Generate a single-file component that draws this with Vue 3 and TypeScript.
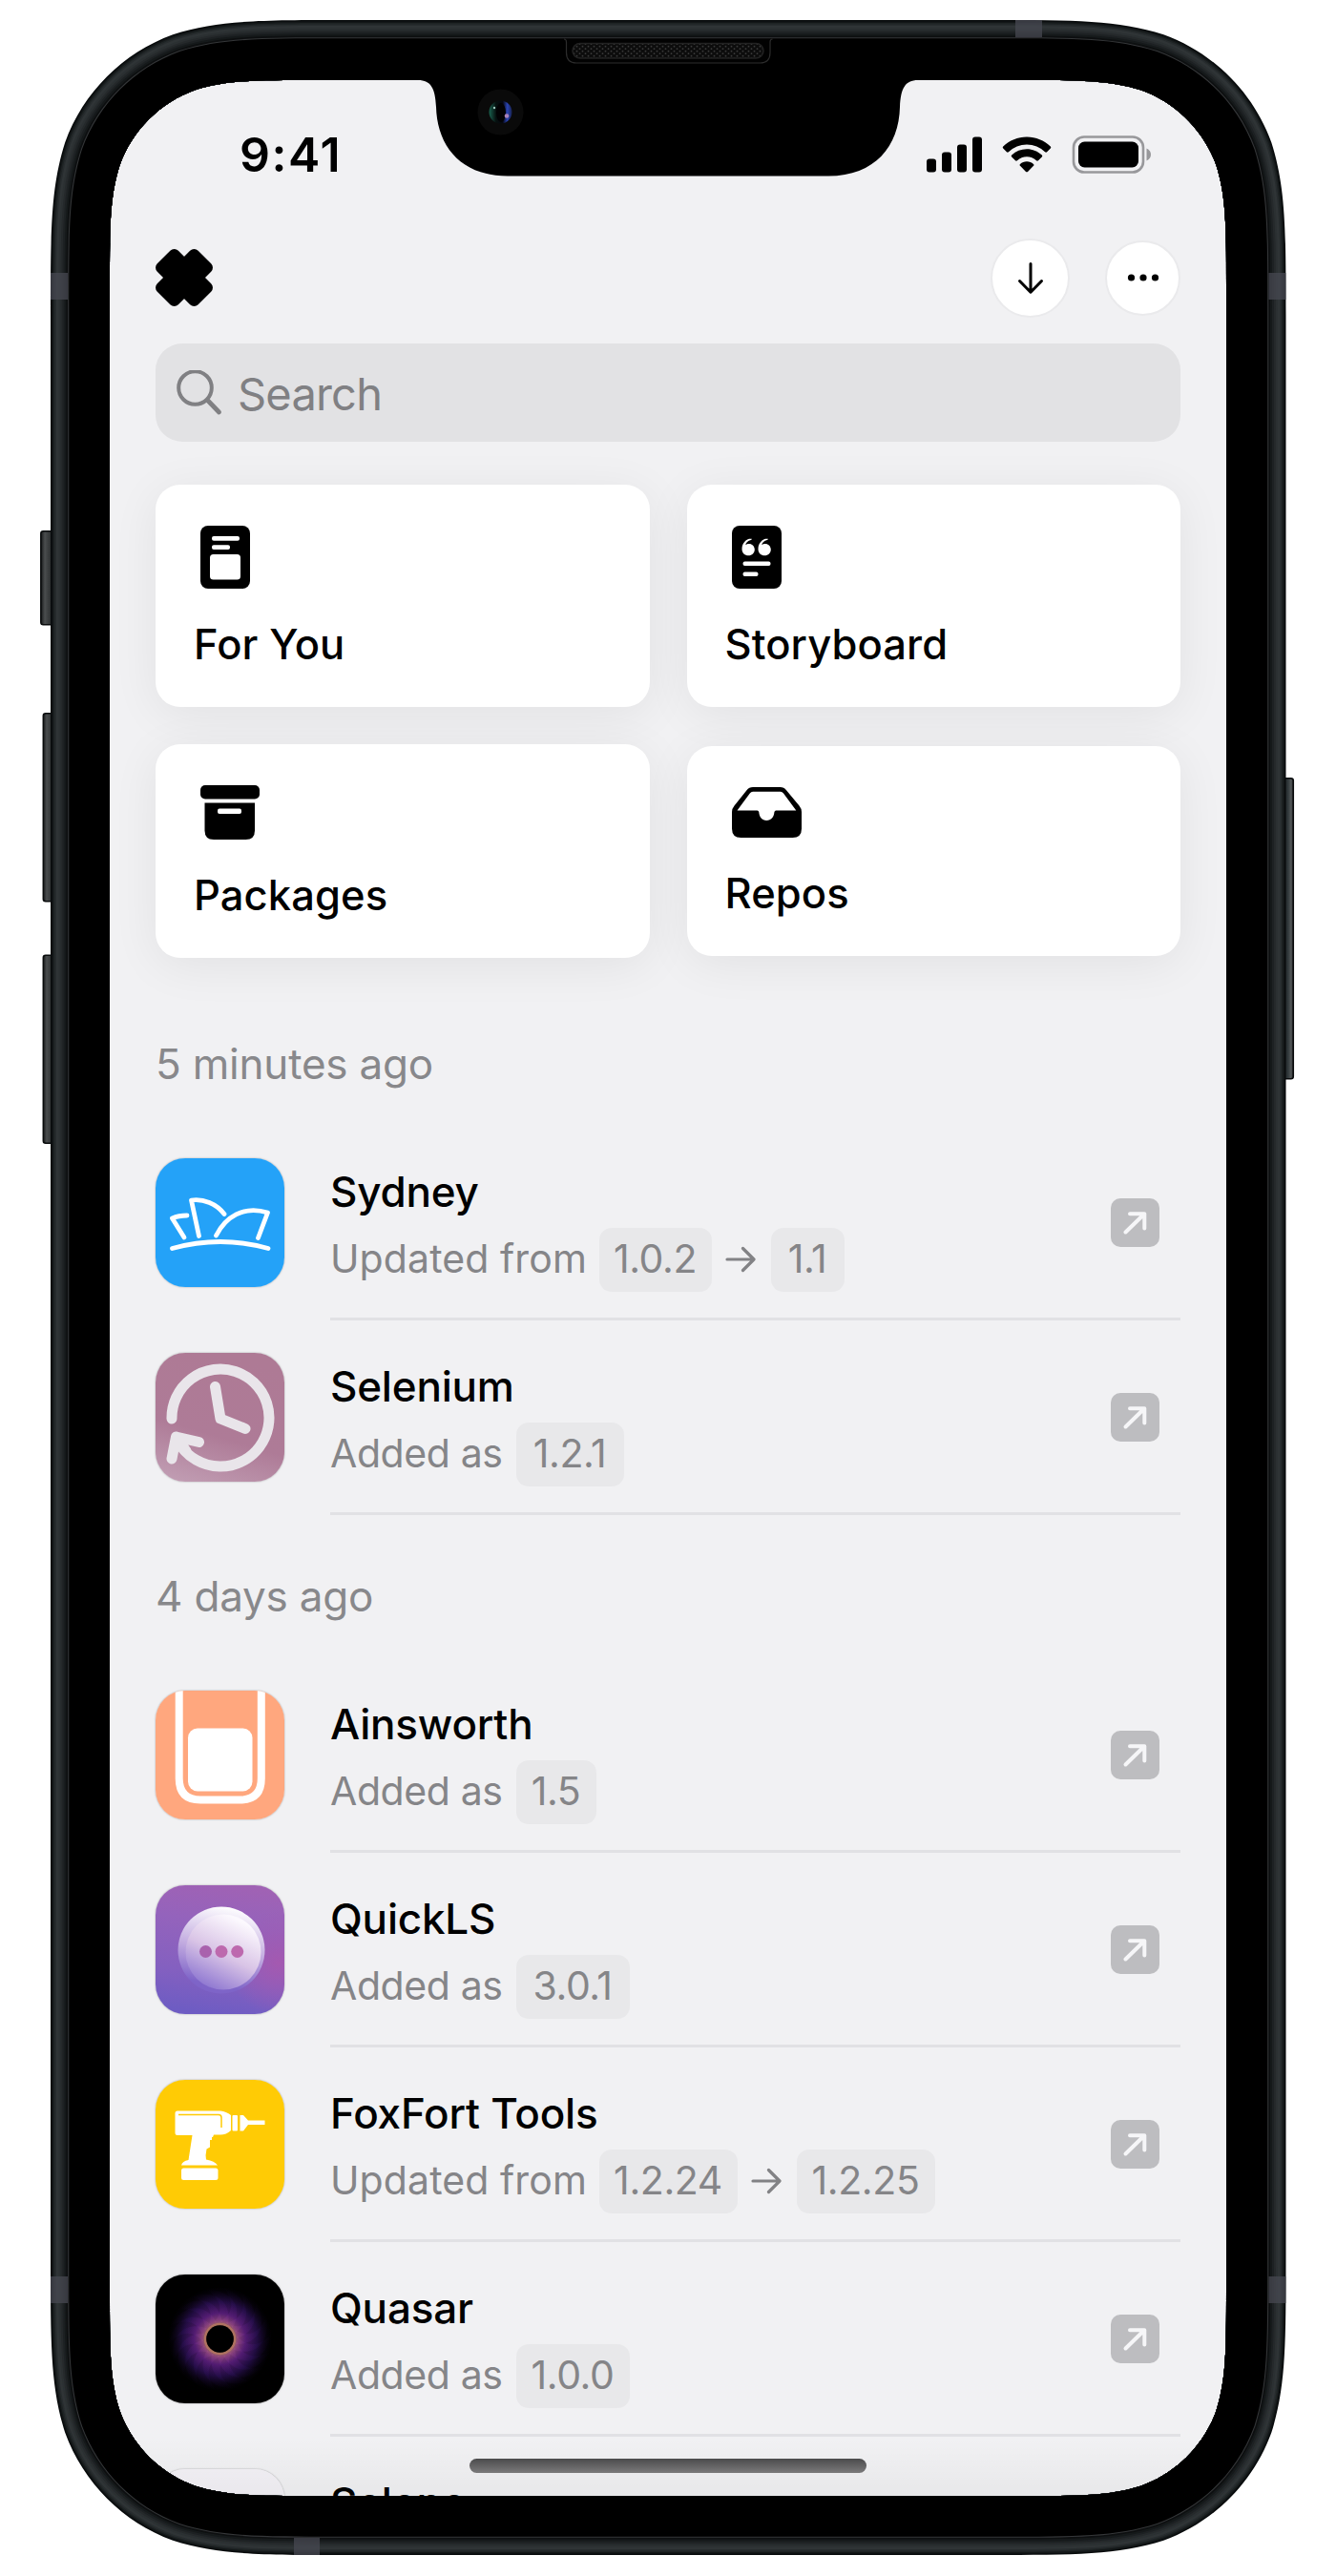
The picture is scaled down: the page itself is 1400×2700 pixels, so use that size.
<script setup lang="ts">
interface Change {
  id: string
  name: string
  label: string
  versions: { text: string; width: number }[]
}

interface Section {
  title: string
  items: Change[]
}

const sections: Section[] = [
  {
    title: '5 minutes ago',
    items: [
      { id: 'sydney', name: 'Sydney', label: 'Updated from', versions: [{ text: '1.0.2', width: 118 }, { text: '1.1', width: 77 }] },
      { id: 'selenium', name: 'Selenium', label: 'Added as', versions: [{ text: '1.2.1', width: 113 }] },
    ],
  },
  {
    title: '4 days ago',
    items: [
      { id: 'ainsworth', name: 'Ainsworth', label: 'Added as', versions: [{ text: '1.5', width: 84 }] },
      { id: 'quickls', name: 'QuickLS', label: 'Added as', versions: [{ text: '3.0.1', width: 119 }] },
      { id: 'foxfort', name: 'FoxFort Tools', label: 'Updated from', versions: [{ text: '1.2.24', width: 145 }, { text: '1.2.25', width: 145 }] },
      { id: 'quasar', name: 'Quasar', label: 'Added as', versions: [{ text: '1.0.0', width: 119 }] },
      { id: 'selene', name: 'Selene', label: 'Added as', versions: [{ text: '1.0', width: 84 }] },
    ],
  },
]

const columns = [
  [
    { id: 'foryou', label: 'For You' },
    { id: 'packages', label: 'Packages' },
  ],
  [
    { id: 'storyboard', label: 'Storyboard' },
    { id: 'repos', label: 'Repos' },
  ],
]

// Rounded rectangle with continuous-curvature corners.
function squircle(x: number, y: number, w: number, h: number, r: number): string {
  const c = [1.52866, 1.08849, 0.86841, 0.63149, 0.37282, 0.16906, 0.07491].map((k) => k * r)
  const [a, b, d, e, f, g, i] = c
  const corner = (px: number, py: number, sx: number, sy: number, flip: boolean) => {
    const p = (u: number, v: number) => (flip ? `${px + sx * v} ${py + sy * u}` : `${px + sx * u} ${py + sy * v}`)
    return `${p(a, 0)} C${p(b, 0)} ${p(d, 0)} ${p(e, i)} C${p(f, g)} ${p(g, f)} ${p(i, e)} C${p(0, d)} ${p(0, b)} ${p(0, a)}`
  }
  return `M${corner(x + w, y, -1, 1, false)} L${corner(x + w, y + h, -1, -1, true)} L${corner(x, y + h, 1, -1, false)} L${corner(x, y, 1, 1, true)} Z`
}

const outer = (inset: number) => squircle(53 + inset, 21 + inset, 1294.5 - 2 * inset, 2657 - 2 * inset, 203 - inset)
const screenHole = squircle(115, 84, 1170, 2532, 141)

const metal = [
  { inset: 0, color: '#080b0c' },
  { inset: 1.5, color: '#131718' },
  { inset: 3, color: '#1e2324' },
  { inset: 4.5, color: '#272c2e' },
  { inset: 6, color: '#2f3436' },
  { inset: 8.5, color: '#2b3032' },
  { inset: 10.5, color: '#25292b' },
  { inset: 12.5, color: '#1d2123' },
  { inset: 14.5, color: '#15191a' },
  { inset: 16.5, color: '#0d0f10' },
  { inset: 18.2, color: '#343638' },
  { inset: 19.3, color: '#000000' },
]

const notch =
  'M438 82 V84 C452 84 456 93 457 112 C458 153 483 184.500 532 184.500 H868 C917 184.500 942 153 943 112 C944 93 948 84 962 84 V82 Z'

const blades = Array.from({ length: 18 }, (_, n) => n * 20)
</script>

<template>
  <div class="stage">
    <div class="screen">
      <div class="status">
        <span class="time">9:41</span>
        <svg class="status-icons" width="236" height="40" viewBox="0 0 236 40">
          <rect x="1" y="24.500" width="10" height="14" rx="3" />
          <rect x="17" y="17.500" width="10" height="21" rx="3" />
          <rect x="33" y="9.500" width="10" height="29" rx="3" />
          <rect x="49" y="1.500" width="10" height="37" rx="3" />
          <path d="M106 1.500c9.500 0 18.300 3.700 24.800 10 .6.600.6 1.400 0 2l-3.700 3.700c-.6.600-1.400.6-2 0a27.300 27.300 0 0 0-38.200 0c-.6.600-1.400.6-2 0l-3.700-3.700c-.6-.6-.6-1.400 0-2 6.500-6.300 15.300-10 24.800-10z" />
          <path d="M106 14.300c6 0 11.600 2.300 15.800 6.300.6.600.6 1.400 0 2l-3.800 3.700c-.6.600-1.400.6-2 0a14.600 14.600 0 0 0-20 0c-.6.600-1.400.6-2 0l-3.800-3.700c-.6-.6-.6-1.400 0-2a22.900 22.900 0 0 1 15.800-6.300z" />
          <path d="M106 27.200c2.700 0 5.100 1 7 2.700.6.600.6 1.300 0 1.900l-6 6.100c-.6.600-1.400.6-2 0l-6-6.100c-.6-.6-.6-1.300 0-1.900 1.900-1.700 4.300-2.700 7-2.700z" />
          <rect x="155" y="1.500" width="73" height="37" rx="11" fill="none" stroke="#98989b" stroke-width="2.600" />
          <rect x="160" y="6.500" width="63" height="27" rx="6.500" />
          <path d="M231.500 13.500c3 1.200 4.500 3.700 4.500 6.500s-1.500 5.300-4.500 6.500z" fill="#98989b" />
        </svg>
      </div>

      <header class="header">
        <svg class="logo" width="60" height="60" viewBox="-30 -30 60 60">
          <rect x="-30.300" y="-15.600" width="60.600" height="31.200" rx="6" transform="rotate(45)" />
          <rect x="-30.300" y="-15.600" width="60.600" height="31.200" rx="6" transform="rotate(-45)" />
        </svg>
        <div class="actions">
          <button class="round large" aria-label="Downloads">
            <svg width="34" height="40" viewBox="0 0 34 40">
              <path d="M17 5.500V35M5.500 23.500 17 35.300 28.500 23.500" fill="none" stroke="#000" stroke-width="3" stroke-linecap="round" stroke-linejoin="round" />
            </svg>
          </button>
          <button class="round" aria-label="More">
            <svg width="40" height="12" viewBox="0 0 40 12">
              <circle cx="7.500" cy="6" r="3.600" /><circle cx="20" cy="6" r="3.600" /><circle cx="32.500" cy="6" r="3.600" />
            </svg>
          </button>
        </div>
      </header>

      <div class="search">
        <svg width="48" height="48" viewBox="0 0 48 48" fill="none" stroke="#808083" stroke-linecap="round">
          <circle cx="19.500" cy="18.500" r="17.300" stroke-width="4" />
          <path d="M32.500 31.500 44.500 44" stroke-width="4.800" />
        </svg>
        <span>Search</span>
      </div>

      <nav class="cards">
        <div v-for="(column, c) in columns" :key="c" class="column">
          <a v-for="card in column" :key="card.id" class="card" :class="card.id">
            <svg v-if="card.id === 'foryou'" width="52" height="66" viewBox="0 0 52 66">
              <rect width="52" height="66" rx="8" />
              <g fill="#fff">
                <rect x="12" y="11" width="29" height="4.800" rx="2" />
                <rect x="12" y="20.300" width="19" height="4.800" rx="2" />
                <rect x="10" y="30" width="32" height="26.500" rx="3.500" />
              </g>
            </svg>
            <svg v-else-if="card.id === 'packages'" width="62" height="57" viewBox="0 0 62 57">
              <rect width="62" height="14.500" rx="5" />
              <path d="M4.500 18.500h52.500V47.500q0 9.500-9.500 9.500h-33.500q-9.500 0-9.500-9.500z" />
              <rect x="18" y="24.500" width="25" height="5.500" rx="2" fill="#fff" />
            </svg>
            <svg v-else-if="card.id === 'storyboard'" width="52" height="66" viewBox="0 0 52 66">
              <rect width="52" height="66" rx="8" />
              <g fill="#fff">
                <path d="M20 13.500C14.500 14 10.500 18.500 10.500 24.500c0 4 3 6.800 6.800 6.800 3.700 0 6.500-2.800 6.500-6.300 0-3.600-2.700-6.100-6-6.100-1.700 0-3 .6-3.600 1.200.4-2.400 2.600-4.400 5.700-5.100 1.300-.4 1.300-1.500.1-1.500z" />
                <path d="M37 13.500C31.500 14 27.500 18.500 27.500 24.500c0 4 3 6.800 6.800 6.800 3.700 0 6.500-2.800 6.500-6.300 0-3.600-2.700-6.100-6-6.100-1.700 0-3 .6-3.600 1.200.4-2.400 2.600-4.400 5.700-5.100 1.300-.4 1.300-1.500.1-1.500z" />
                <rect x="11.500" y="37.500" width="29" height="4.600" rx="2" />
                <rect x="11.500" y="48.500" width="16" height="4.600" rx="2" />
              </g>
            </svg>
            <svg v-else width="73" height="53" viewBox="0 0 73 53">
              <path fill-rule="evenodd" d="M22 0H50.500q4 0 6.500 3.300L70.500 19.500Q73 22.500 73 26V43.500Q73 53 63.500 53H9.500Q0 53 0 43.500V26q0-3.500 2.500-6.500L15.500 3.300Q18 0 22 0zM22 4.800q-2 0-3.200 1.700L5.500 24.500H26.500q1.500 0 1.800 1.800C28.700 31.500 31.500 35 36.300 35s7.700-3.500 8.100-8.700q.3-1.800 1.800-1.800H67.300L54 6.500q-1.300-1.700-3.200-1.700z" />
            </svg>
            <span>{{ card.label }}</span>
          </a>
        </div>
      </nav>

      <section v-for="section in sections" :key="section.title" class="section">
        <h2>{{ section.title }}</h2>
        <article v-for="item in section.items" :key="item.id" class="row">
          <div class="app-icon">
            <svg v-if="item.id === 'sydney'" viewBox="0 0 135 135" fill="none" stroke="#fff" stroke-width="4.800" stroke-linecap="round" stroke-linejoin="round">
              <rect width="135" height="135" fill="#24a2f8" stroke="none" />
              <path d="M33 60Q24 60 17.500 63L30 83" />
              <path d="M45.500 81.500 37.500 44C50 42 64 48 72 58.500" />
              <path d="M63.500 81C73 62 92 49 117.500 57L107.500 83.500" />
              <path d="M17.500 94.500Q68 80.500 118 94.500" />
            </svg>
            <svg v-else-if="item.id === 'selenium'" viewBox="0 0 135 135" fill="none" stroke="#e9e5ea" stroke-width="11" stroke-linecap="round" stroke-linejoin="round">
              <defs>
                <linearGradient id="selenium-bg" x1=".2" y1="1" x2=".5" y2="0">
                  <stop offset="0" stop-color="#c09cb2" /><stop offset=".4" stop-color="#ae7b97" /><stop offset="1" stop-color="#ae7a95" />
                </linearGradient>
              </defs>
              <rect width="135" height="135" fill="url(#selenium-bg)" stroke="none" />
              <path d="M17 69A51 51 0 1 1 26 97" />
              <path d="M45.500 93.500 21.500 88 17 111M21.500 88 32 103" />
              <path d="M62.500 35.500 68 69 94 79.500" />
            </svg>
            <svg v-else-if="item.id === 'ainsworth'" viewBox="0 0 135 135">
              <rect width="135" height="135" fill="#ffa77e" />
              <path d="M24.700-5V92Q24.700 114.500 47 114.500H88.500Q110.800 114.500 110.800 92V-5" fill="none" stroke="#fff" stroke-width="8" />
              <rect x="34" y="39.500" width="67.500" height="66" rx="10" fill="#fff" />
            </svg>
            <svg v-else-if="item.id === 'quickls'" viewBox="0 0 135 135">
              <defs>
                <linearGradient id="quick-bg" x1=".45" y1="1" x2=".6" y2="0">
                  <stop offset="0" stop-color="#6e5cc3" /><stop offset=".3" stop-color="#8460c0" /><stop offset=".7" stop-color="#9463bc" /><stop offset="1" stop-color="#a062b4" />
                </linearGradient>
                <radialGradient id="quick-pink" cx=".95" cy=".6" r=".4">
                  <stop offset="0" stop-color="#a459b0" /><stop offset="1" stop-color="#a459b0" stop-opacity="0" />
                </radialGradient>
                <linearGradient id="quick-ring" x1=".6" y1="0" x2=".4" y2="1">
                  <stop offset="0" stop-color="#fff" /><stop offset=".5" stop-color="#c2abe0" /><stop offset=".9" stop-color="#7e64c8" />
                </linearGradient>
                <linearGradient id="quick-disc" x1=".75" y1=".1" x2=".3" y2="1">
                  <stop offset="0" stop-color="#fcf9fe" /><stop offset=".5" stop-color="#d9c4e6" /><stop offset="1" stop-color="#8b74d0" />
                </linearGradient>
              </defs>
              <rect width="135" height="135" fill="url(#quick-bg)" />
              <rect width="135" height="135" fill="url(#quick-pink)" />
              <circle cx="69" cy="68" r="45.500" fill="url(#quick-ring)" />
              <circle cx="71" cy="70" r="39.500" fill="url(#quick-disc)" />
              <g fill="#bd69ae">
                <circle cx="52.500" cy="69.500" r="6.500" fill="#a962ad" /><circle cx="69" cy="69.500" r="6.500" /><circle cx="85.700" cy="69.500" r="6.500" />
              </g>
            </svg>
            <svg v-else-if="item.id === 'foxfort'" viewBox="0 0 135 135">
              <rect width="135" height="135" fill="#ffcb05" />
              <g fill="#fff">
                <path d="M23 32.500H68Q74 33 79 37V53Q74 57.500 68 57.500H61L60 60H59V63H57V70.500L53.500 72.500Q52 79 53 83.500 62 85 65 89.500H27Q28 85 34.500 84L38.500 58H23Q20.500 58 20.500 55.500V35Q20.500 32.500 23 32.500z" />
                <rect x="27" y="92.500" width="38.500" height="12.500" rx="2.500" />
                <rect x="80.500" y="37" width="5.500" height="16.500" rx="1" />
                <path d="M88.500 37H92L97 42.500H114.500V47H97L92 53.500H88.500z" />
              </g>
              <path d="M24 36.500H66Q69 36.500 69 39.500V50" fill="none" stroke="#ffcb05" stroke-width="1.500" />
            </svg>
            <svg v-else-if="item.id === 'quasar'" viewBox="0 0 135 135">
              <defs>
                <radialGradient id="quasar-glow" gradientUnits="userSpaceOnUse" cx="67.500" cy="67.500" r="54">
                  <stop offset=".27" stop-color="#bd7a75" /><stop offset=".36" stop-color="#a04d92" />
                  <stop offset=".5" stop-color="#6a2492" /><stop offset=".72" stop-color="#31125f" /><stop offset="1" stop-color="#0b0418" stop-opacity=".1" />
                </radialGradient>
              </defs>
              <rect width="135" height="135" fill="#000" />
              <circle cx="67.500" cy="67.500" r="54" fill="url(#quasar-glow)" opacity=".55" />
              <path v-for="angle in blades" :key="angle" d="M67.500 49C80 43 84 30 72 14 98 24 102 46 84 61z" fill="url(#quasar-glow)" opacity=".3" :transform="`rotate(${angle} 67.5 67.5)`" />
              <circle cx="67.500" cy="67.500" r="15.500" fill="none" stroke="#b97b62" stroke-width="2.500" opacity=".8" />
              <circle cx="67.500" cy="67.500" r="14.300" fill="#000" />
            </svg>
            <svg v-else viewBox="0 0 135 135"><rect width="135" height="135" fill="#f3f1f6" /></svg>
          </div>
          <div class="body">
            <div class="texts">
              <h3>{{ item.name }}</h3>
              <div class="detail">
                <span class="label" :class="{ wide: item.versions.length > 1 }">{{ item.label }}</span>
                <template v-for="(version, n) in item.versions" :key="version.text">
                  <svg v-if="n > 0" class="arrow" width="32" height="28" viewBox="0 0 32 28">
                    <path d="M2 14H29M18.500 2.500 30 14 18.500 25.500" fill="none" stroke="#828285" stroke-width="3.200" stroke-linecap="round" stroke-linejoin="round" />
                  </svg>
                  <span class="badge" :style="{ width: version.width + 'px' }">{{ version.text }}</span>
                </template>
              </div>
            </div>
            <svg class="open" width="51" height="51" viewBox="0 0 51 51">
              <rect width="51" height="51" rx="10" fill="#bdbdc0" />
              <path d="M15.500 35.500 35 16.500M20 16.300H35.300V31.500" fill="none" stroke="#f6f6f8" stroke-width="4" stroke-linecap="round" stroke-linejoin="round" />
            </svg>
          </div>
        </article>
      </section>
      <div class="shade"></div>
      <div class="home"></div>
    </div>

    <svg class="device" width="1400" height="2700" viewBox="0 0 1400 2700">
      <defs>
        <linearGradient id="key-left"><stop offset="0" stop-color="#161819" /><stop offset=".3" stop-color="#4a4d4e" /><stop offset="1" stop-color="#1d2021" /></linearGradient>
        <linearGradient id="key-right"><stop offset="0" stop-color="#161b1c" /><stop offset=".5" stop-color="#30373a" /><stop offset=".8" stop-color="#55595a" /><stop offset="1" stop-color="#161819" /></linearGradient>
        <pattern id="mesh" width="6" height="5" patternUnits="userSpaceOnUse">
          <rect width="6" height="5" fill="#0c0c0c" /><circle cx="1.500" cy="1.200" r=".9" fill="#3a3a3a" /><circle cx="4.500" cy="3.700" r=".9" fill="#3a3a3a" />
        </pattern>
        <linearGradient id="lens"><stop offset="0" stop-color="#1a6250" /><stop offset=".3" stop-color="#06100f" /><stop offset=".6" stop-color="#05060f" /><stop offset=".8" stop-color="#2a44b4" /><stop offset="1" stop-color="#18224e" /></linearGradient>
      </defs>
      <g stroke="#090b0c" stroke-width="1.500">
        <rect x="42.800" y="556.800" width="14" height="98" rx="2.500" fill="url(#key-left)" />
        <rect x="45.300" y="747.800" width="12" height="197" rx="2.500" fill="url(#key-left)" />
        <rect x="45.300" y="1001.300" width="12" height="197" rx="2.500" fill="url(#key-left)" />
        <rect x="1344" y="815.800" width="11.300" height="315" rx="2.500" fill="url(#key-right)" />
      </g>
      <path v-for="ring in metal" :key="ring.inset" :d="outer(ring.inset) + screenHole" :fill="ring.color" fill-rule="evenodd" />
      <g fill="#474852" opacity=".75">
        <rect x="53" y="286" width="18" height="28" /><rect x="1329.500" y="286" width="18" height="28" />
        <rect x="53" y="2386" width="18" height="28" /><rect x="1329.500" y="2386" width="18" height="28" />
        <rect x="1064" y="21" width="28" height="18" /><rect x="308" y="2660" width="27" height="18" />
      </g>
      <path :d="notch" fill="#000" />
      <path d="M591 41Q593.500 41 593.500 44V55Q593.500 66 604 66H796.500Q807 66 807 55V44Q807 41 809.500 41" fill="#020202" stroke="#2c2c2c" stroke-width="1.200" />
      <rect x="600" y="45.500" width="200" height="15.500" rx="7.700" fill="url(#mesh)" stroke="#222" stroke-width="1.500" />
      <circle cx="524.500" cy="117.500" r="24" fill="#0a0a0a" />
      <circle cx="524.500" cy="117.500" r="12" fill="url(#lens)" />
      <ellipse cx="525" cy="118" rx="5" ry="10" fill="#020204" />
      <circle cx="531" cy="121.500" r="2.300" fill="#a982ba" /><circle cx="518" cy="113" r="1.200" fill="#9ec9bf" />
    </svg>
  </div>
</template>

<style>
body {
  background: #fff;
}
</style>

<style scoped>
.stage {
  position: relative;
  width: 1400px;
  height: 2700px;
  box-sizing: border-box;
  padding: 84px 115px;
  overflow: hidden;
  font-family: Inter, "Liberation Sans", sans-serif;
}
.device {
  position: absolute;
  inset: 0;
}
.screen {
  position: relative;
  width: 1170px;
  height: 2532px;
  box-sizing: border-box;
  padding: 0 48px;
  background: #f1f1f3;
  overflow: hidden;
  clip-path: inset(0 round 120px);
}
.status {
  display: flex;
  align-items: center;
  justify-content: space-between;
  height: 156px;
  padding: 0 31px 0 88px;
}
.time {
  font-size: 50px;
  font-weight: 600;
  letter-spacing: 1.6px;
}
.header {
  display: flex;
  align-items: center;
  justify-content: space-between;
  height: 102px;
}
.actions {
  display: flex;
  align-items: center;
  gap: 37px;
}
.round {
  display: flex;
  align-items: center;
  justify-content: center;
  width: 79px;
  height: 79px;
  padding: 0;
  border: 2px solid #eaeaec;
  border-radius: 50%;
  background: #fff;
}
.round.large {
  width: 83px;
  height: 83px;
}
.search {
  display: flex;
  align-items: center;
  gap: 16px;
  height: 103px;
  box-sizing: border-box;
  margin-top: 18px;
  padding-left: 22px;
  border-radius: 28px;
  background: #e2e2e4;
  color: #808083;
  font-size: 47px;
  letter-spacing: -0.8px;
}
.search span {
  padding-top: 1px;
}
.cards {
  display: flex;
  gap: 39px;
  height: 497px;
  margin-top: 45px;
}
.column {
  display: flex;
  flex: 1;
  flex-direction: column;
  gap: 39px;
}
.column:last-child {
  gap: 41px;
}
.card {
  display: flex;
  flex-direction: column;
  align-items: flex-start;
  justify-content: space-between;
  box-sizing: border-box;
  height: 233px;
  padding: 43px 47px 38px;
  border-radius: 26px;
  background: #fff;
  box-shadow: 0 8px 50px rgba(0, 0, 0, 0.065);
}
.card.packages {
  height: 224px;
}
.card.repos {
  height: 220px;
}
.card span {
  margin-left: -7px;
  color: #000;
  font-size: 43.5px;
  font-weight: 500;
  line-height: 56px;
  letter-spacing: 0.1px;
}
.section h2 {
  margin: 55px 0 35px;
  color: #88888b;
  font-size: 44px;
  font-weight: 400;
  line-height: 60px;
  letter-spacing: -0.2px;
}
.cards + .section h2 {
  margin-top: 80px;
}
.row {
  display: flex;
  gap: 48px;
  height: 204px;
}
.app-icon {
  flex: none;
  width: 135px;
  height: 135px;
  margin-top: 34px;
  border-radius: 31px;
  overflow: hidden;
  box-shadow: 0 0 2px rgba(0, 0, 0, 0.35);
}
.app-icon svg {
  display: block;
}
.body {
  display: flex;
  flex: 1;
  justify-content: space-between;
  box-sizing: border-box;
  padding: 42px 22px 0 0;
  border-bottom: 3px solid #e1e1e4;
}
.texts h3 {
  margin: 0 0 10px;
  color: #000;
  font-size: 44px;
  font-weight: 500;
  line-height: 54px;
  letter-spacing: -0.2px;
}
.detail {
  display: flex;
  align-items: center;
  height: 68px;
  color: #858588;
  font-size: 41px;
  letter-spacing: -0.4px;
  white-space: nowrap;
}
.label {
  width: 195px;
}
.label.wide {
  width: 282px;
  letter-spacing: 0.1px;
}
.label,
.badge {
  line-height: 65px;
}
.badge {
  height: 67px;
  border-radius: 13px;
  background: #e8e8ea;
  text-align: center;
  text-indent: -1px;
}
.label {
  margin-top: -2px;
}
.arrow {
  margin: 0 16px 0 14px;
}
.open {
  margin-top: 34px;
}
.shade {
  position: absolute;
  right: 0;
  bottom: 0;
  left: 0;
  height: 60px;
  background: linear-gradient(rgba(0, 0, 0, 0), rgba(0, 0, 0, 0.04));
}
.home {
  position: absolute;
  bottom: 24px;
  left: 377px;
  width: 416px;
  height: 15px;
  border-radius: 8px;
  background: linear-gradient(#4b4b4c, #7b7a7b);
}
</style>
